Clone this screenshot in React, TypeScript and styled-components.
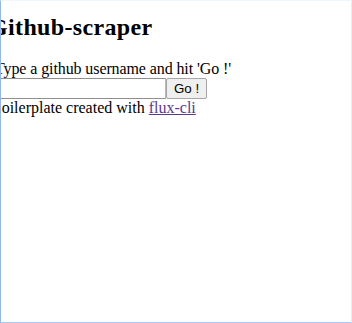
import React from "react";
import styled, { createGlobalStyle } from "styled-components";

const GlobalStyle = createGlobalStyle`
  html, body {
    margin: 0;
    padding: 0;
    background: #ffffff;
  }
  body {
    font-family: "Liberation Serif", "Times New Roman", serif;
    font-size: 16px;
    color: #000000;
  }
`;

const Frame = styled.div`
  box-sizing: border-box;
  width: 352px;
  height: 323px;
  overflow: hidden;
  border-left: 1px solid #8fb8f2;
  border-bottom: 1px solid #a9c9f7;
  border-right: 1px solid #e4eefc;
  border-top: 1px solid #f0f6fd;
`;

const Content = styled.div`
  margin-left: -6px;
`;

const Title = styled.h1`
  font-size: 24px;
  font-weight: bold;
  margin: 12px 0 19px -6px;
  line-height: 28px;
  letter-spacing: 0.35px;
`;

const Hint = styled.div`
  line-height: 18px;
  letter-spacing: -0.1px;
`;

const SearchForm = styled.form`
  display: flex;
  align-items: center;
  margin: 0;
  height: 21px;
`;

const UsernameInput = styled.input`
  box-sizing: border-box;
  width: 171px;
  height: 21px;
  margin: 0;
  padding: 1px 2px;
  border: 1px solid #8f8f8f;
  border-right-color: #b8b8b8;
  font-family: "Liberation Sans", Arial, sans-serif;
  font-size: 13.33px;
`;

const GoButton = styled.button`
  box-sizing: border-box;
  width: 41px;
  height: 21px;
  margin: 0;
  padding: 1px 6px;
  border: 1px solid #a6a6a6;
  border-radius: 2px;
  background: #efefef;
  font-family: "Liberation Sans", Arial, sans-serif;
  font-size: 13.33px;
  color: #000000;
`;

const Footer = styled.div`
  line-height: 18px;
  margin-left: -4px;
`;

const FooterLink = styled.a`
  color: #5a3a8e;
  text-decoration: underline;
`;

export default function App() {
  return (
    <>
      <GlobalStyle />
      <Frame>
        <Content>
          <Title>Github-scraper</Title>
          <Hint>Type a github username and hit 'Go !'</Hint>
          <SearchForm onSubmit={(e) => e.preventDefault()}>
            <UsernameInput type="text" />
            <GoButton type="submit">Go !</GoButton>
          </SearchForm>
          <Footer>
            Boilerplate created with <FooterLink href="#">flux-cli</FooterLink>
          </Footer>
        </Content>
      </Frame>
    </>
  );
}
